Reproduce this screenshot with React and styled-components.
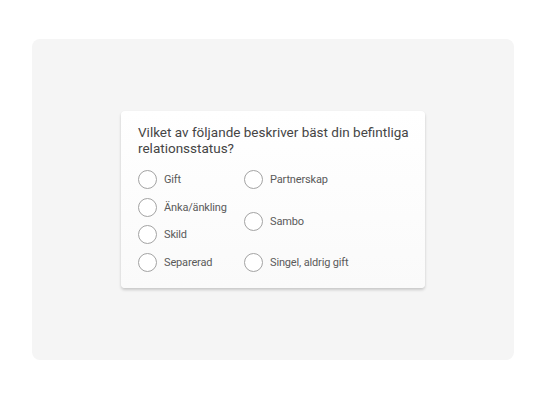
import React from "react";
import styled, { createGlobalStyle } from "styled-components";

const GlobalStyle = createGlobalStyle`
  html, body {
    margin: 0;
    padding: 0;
    background: #ffffff;
  }
  body {
    font-family: Roboto, "Open Sans", sans-serif;
  }
`;

const Page = styled.div`
  width: 547px;
  height: 400px;
  box-sizing: border-box;
  padding: 39px 33px 40px 32px;
`;

const Panel = styled.div`
  height: 100%;
  background: #f5f5f5;
  border-radius: 8px;
  display: flex;
  justify-content: center;
  align-items: flex-start;
  padding-top: 72px;
  box-sizing: border-box;
`;

const Card = styled.div`
  width: 304px;
  box-sizing: border-box;
  padding: 14px 8px 16px 17px;
  background: linear-gradient(#ffffff, #fafafa);
  border-radius: 4px;
  box-shadow: 0 2px 3px rgba(0, 0, 0, 0.18), 0 0 1px rgba(0, 0, 0, 0.06);
`;

const Question = styled.h2`
  margin: 0 0 14px 0;
  font-size: 13.5px;
  line-height: 15.5px;
  font-weight: 400;
  color: #454545;
`;

const Options = styled.div`
  display: grid;
  grid-template-columns: 106px 1fr;
`;

const Column = styled.div`
  display: flex;
  flex-direction: column;
  gap: ${(p) => (p.$spread ? "0" : "8.7px")};
  justify-content: ${(p) => (p.$spread ? "space-between" : "flex-start")};
`;

const Option = styled.label`
  display: flex;
  align-items: center;
  gap: 7px;
  height: 19px;
  font-size: 11px;
  letter-spacing: -0.15px;
  color: #5a5a5a;
`;

const Circle = styled.span`
  width: 19px;
  height: 19px;
  box-sizing: border-box;
  border: 1px solid #a3a3a3;
  border-radius: 50%;
  background: #ffffff;
  flex-shrink: 0;
`;

const left = ["Gift", "Änka/änkling", "Skild", "Separerad"];
const right = ["Partnerskap", "Sambo", "Singel, aldrig gift"];

export default function App() {
  return (
    <>
      <GlobalStyle />
      <Page>
        <Panel>
          <Card>
            <Question>
              Vilket av följande beskriver bäst din befintliga relationsstatus?
            </Question>
            <Options>
              <Column>
                {left.map((o) => (
                  <Option key={o}>
                    <Circle />
                    {o}
                  </Option>
                ))}
              </Column>
              <Column $spread>
                {right.map((o) => (
                  <Option key={o}>
                    <Circle />
                    {o}
                  </Option>
                ))}
              </Column>
            </Options>
          </Card>
        </Panel>
      </Page>
    </>
  );
}
